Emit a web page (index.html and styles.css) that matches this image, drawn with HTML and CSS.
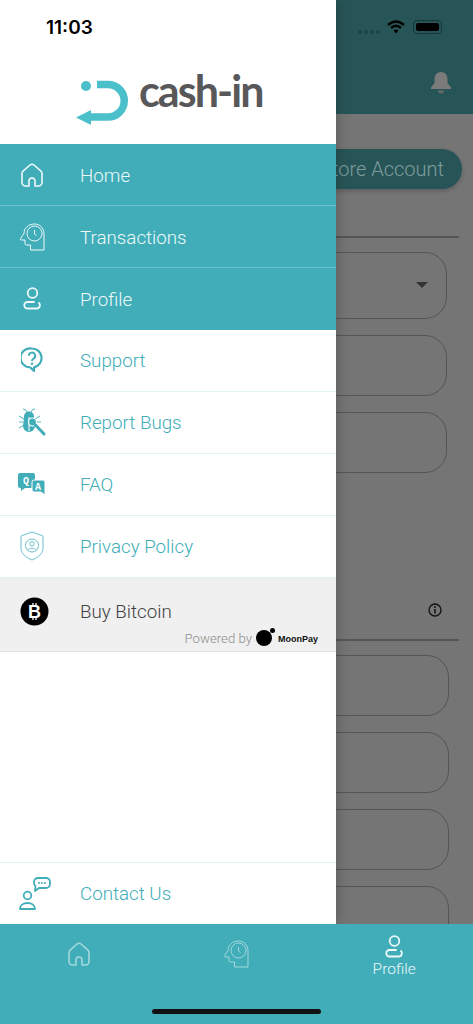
FILE: index.html
```html
<!DOCTYPE html>
<html lang="en">
<head>
    <meta charset="UTF-8">
    <meta name="viewport" content="width=device-width, initial-scale=1.0">
    <title>Cash-in</title>
    <link rel="stylesheet" href="styles.css">
</head>
<body>
    <svg class="defs" width="0" height="0">
        <symbol id="i-home" viewBox="0 0 22 24">
            <path d="M8 23H4.500A3.500 3.500 0 0 1 1 19.500V10.500Q1 8.800 2.300 7.800L9 2Q11 .4 13 2L19.700 7.800Q21 8.800 21 10.500V19.500A3.500 3.500 0 0 1 17.500 23H14V18A3 3 0 0 0 8 18Z" fill="none" stroke="currentColor" stroke-width="1.600" stroke-linejoin="round"/>
        </symbol>
        <symbol id="i-head" viewBox="0 0 26 28">
            <g fill="none" stroke="currentColor" stroke-width="1" stroke-linejoin="round">
                <path d="M25 27H11.500V22H7.500A1.500 1.500 0 0 1 6 20.500V17H2.500Q.8 17 1.600 15.500L5 10.500C5 5 9.500 1 15.500 1C21 1 25 5 25 11Z"/>
                <circle cx="15.500" cy="10.500" r="7.500"/>
                <path d="M15.500 7V11L17.500 12.500"/>
            </g>
        </symbol>
        <symbol id="i-user" viewBox="0 0 19 23">
            <g fill="none" stroke="currentColor" stroke-width="1.800" stroke-linecap="round">
                <circle cx="9.500" cy="6" r="4.800"/>
                <path d="M11 15H4.500A3.200 3.200 0 0 0 4.500 21.500H14A3.200 3.200 0 0 0 16 16"/>
            </g>
        </symbol>
    </svg>

    <div class="app">
        <aside class="drawer">
            <div class="drawer-top">
                <div class="clock">11:03</div>
                <div class="logo">
                    <svg class="logo-mark" width="53" height="47" viewBox="0 0 53 47">
                        <circle cx="10" cy="6" r="5" fill="#4bc0cb"/>
                        <path d="M21 4.500H32A16.250 16.250 0 0 1 32 37H13" fill="none" stroke="#4bc0cb" stroke-width="7.500"/>
                        <path d="M0 37.500L15 30V45Z" fill="#4bc0cb"/>
                    </svg>
                    <span class="logo-text">cash-in</span>
                </div>
            </div>

            <a class="nav-row active">
                <span class="nav-icon"><svg width="22" height="24"><use href="#i-home"/></svg></span>
                <span>Home</span>
            </a>
            <a class="nav-row active">
                <span class="nav-icon"><svg width="26" height="28"><use href="#i-head"/></svg></span>
                <span>Transactions</span>
            </a>
            <a class="nav-row active">
                <span class="nav-icon"><svg width="19" height="23"><use href="#i-user"/></svg></span>
                <span>Profile</span>
            </a>
            <a class="nav-row">
                <span class="nav-icon">
                    <svg width="22" height="26" viewBox="0 0 22 26">
                        <path d="M11 1.500A9.500 9.500 0 1 0 9 20.300L13 24V20.300A9.500 9.500 0 0 0 11 1.500Z" fill="none" stroke="#40adb8" stroke-width="2.200" stroke-linejoin="round"/>
                        <path d="M7.800 8.800A3.200 3.200 0 1 1 12.500 11.600Q11 12.500 11 14" fill="none" stroke="#40adb8" stroke-width="1.900"/>
                        <circle cx="11" cy="16.800" r="1.200" fill="#40adb8"/>
                    </svg>
                </span>
                <span>Support</span>
            </a>
            <a class="nav-row">
                <span class="nav-icon">
                    <svg width="28" height="29" viewBox="0 0 28 29">
                        <g stroke="#40adb8" fill="none" stroke-width=".9">
                            <path d="M5 1Q8 1 9 4M17 1Q14 1 13 4M1 8L6 11M1 14H5M1 20L6 17M22 8L17 11M23 14H19"/>
                        </g>
                        <path d="M6 9A5 5 0 0 1 16 8L17 18A6 6 0 0 1 5 18Z" fill="#40adb8"/>
                        <path d="M11 9V23" stroke="#fff" stroke-width="1"/>
                        <circle cx="14.500" cy="14" r="4" fill="#40adb8" stroke="#fff" stroke-width="1.200"/>
                        <path d="M17.500 17L26 26" stroke="#40adb8" stroke-width="3" stroke-linecap="round"/>
                    </svg>
                </span>
                <span>Report Bugs</span>
            </a>
            <a class="nav-row">
                <span class="nav-icon">
                    <svg width="28" height="22" viewBox="0 0 28 22">
                        <path d="M2 0H15A2 2 0 0 1 17 2V13A2 2 0 0 1 15 15H7L3 18V15H2A2 2 0 0 1 0 13V2A2 2 0 0 1 2 0Z" fill="#40adb8"/>
                        <path d="M16 7H25A2 2 0 0 1 27 9V18V22L23 19H16A2 2 0 0 1 14 17V9A2 2 0 0 1 16 7Z" fill="#40adb8" stroke="#fff"/>
                        <text class="qa-letter" x="5" y="11">Q</text>
                        <text class="qa-letter" x="17" y="17">A</text>
                    </svg>
                </span>
                <span>FAQ</span>
            </a>
            <a class="nav-row">
                <span class="nav-icon">
                    <svg width="24" height="30" viewBox="0 0 24 30">
                        <g fill="none" stroke="#6cc3cc" stroke-width="1">
                            <path d="M12 1L23 5V17C23 23 17 27 12 29C7 27 1 23 1 17V5Z"/>
                            <circle cx="12" cy="14.500" r="6.500"/>
                            <circle cx="12" cy="12.800" r="2.200"/>
                            <path d="M7.800 19.500C8.500 16.500 15.500 16.500 16.200 19.500"/>
                        </g>
                    </svg>
                </span>
                <span>Privacy Policy</span>
            </a>
            <div class="buy-row">
                <div class="buy-main">
                    <span class="nav-icon nudge-2">
                        <svg width="29" height="29" viewBox="0 0 29 29">
                            <circle cx="14.500" cy="14.500" r="14" fill="#000"/>
                            <text class="btc-letter" x="14.500" y="20.500">B</text>
                            <path d="M13 6V9M16 6V9M13 20V23M16 20V23" stroke="#fff" stroke-width="1.300"/>
                        </svg>
                    </span>
                    <span>Buy Bitcoin</span>
                </div>
                <div class="powered">
                    <span>Powered by</span>
                    <svg class="moon" width="20" height="18" viewBox="0 0 20 18">
                        <circle cx="8" cy="10" r="8" fill="#000"/>
                        <circle cx="16.500" cy="2.500" r="2.500" fill="#000"/>
                    </svg>
                    <span class="moon-name">MoonPay</span>
                </div>
            </div>
            <div class="spacer"></div>
            <a class="nav-row contact">
                <span class="nav-icon nudge-3">
                    <svg width="32" height="33" viewBox="0 0 32 33">
                        <g fill="none" stroke="#40adb8" stroke-width="1.800">
                            <path d="M19 1H27A4 4 0 0 1 31 5V7A4 4 0 0 1 27 11H20L16 14L16.500 9Q15 8 15 6V5A4 4 0 0 1 19 1Z" stroke-linejoin="round"/>
                            <circle cx="8.500" cy="18.500" r="3.800"/>
                            <path d="M1 32C1 24 16 24 16 32Z" stroke-linejoin="round"/>
                        </g>
                        <path d="M19 6H21M22 6H24M25 6H27" stroke="#40adb8" stroke-width="1.500"/>
                    </svg>
                </span>
                <span>Contact Us</span>
            </a>
        </aside>

        <main class="behind">
            <div class="behind-top">
                <div class="status-icons">
                    <span class="signal"><i></i><i></i><i></i><i></i></span>
                    <svg width="18" height="14" viewBox="0 0 18 14">
                        <path d="M1 5Q9 -2 17 5M4 8Q9 3.500 14 8" fill="none" stroke="#000" stroke-width="2.400"/>
                        <path d="M6.500 10.500Q9 8.500 11.500 10.500L9 13.500Z" fill="#000"/>
                    </svg>
                    <span class="battery"><b></b></span>
                </div>
                <svg class="bell" width="20" height="22" viewBox="0 0 20 22">
                    <path d="M10 0C15 0 16.500 4 16.500 8V11L20 15.500V17H0V15.500L3.500 11V8C3.500 4 5 0 10 0Z" fill="#7b7b7b"/>
                    <path d="M7 18.500H13Q12.500 21.500 10 21.500T7 18.500Z" fill="#6a6a6a"/>
                </svg>
            </div>
            <div class="behind-body">
                <div class="restore-btn">Restore Account</div>
                <div class="rule"></div>
                <div class="field tall"><span class="caret"></span></div>
                <div class="field"></div>
                <div class="field"></div>
                <div class="info-line">
                    <svg width="14" height="14" viewBox="0 0 14 14">
                        <circle cx="7" cy="7" r="6" fill="none" stroke="#111" stroke-width="1.300"/>
                        <path d="M7 6V10.500" stroke="#111" stroke-width="1.500"/>
                        <circle cx="7" cy="4" r=".9" fill="#111"/>
                    </svg>
                </div>
                <div class="rule second"></div>
                <div class="field wide"></div>
                <div class="field wide"></div>
                <div class="field wide"></div>
                <div class="field wide"></div>
            </div>
        </main>
    </div>

    <nav class="tabbar">
        <div class="tabs">
            <div class="tab dim"><svg width="22" height="24"><use href="#i-home"/></svg></div>
            <div class="tab dim"><svg width="26" height="28"><use href="#i-head"/></svg></div>
            <div class="tab current"><svg width="19" height="23"><use href="#i-user"/></svg><span>Profile</span></div>
        </div>
        <div class="home-bar"></div>
    </nav>
</body>
</html>
```

FILE: styles.css
```css
* {
    box-sizing: border-box;
}
html, body {
    margin: 0;
    padding: 0;
}
body {
    width: 473px;
    height: 1024px;
    overflow: hidden;
    font-family: Roboto, "Noto Sans", sans-serif;
    font-weight: 300;
    background-color: #757575;
}
.defs {
    display: block;
    height: 0;
}
.app {
    display: flex;
    height: 924px;
}

/* drawer */
.drawer {
    position: relative;
    z-index: 1;
    display: flex;
    flex-direction: column;
    flex: 0 0 336px;
    background-color: #fff;
    box-shadow: 0 0 14px rgba(0,0,0,0.25);
}
.drawer-top {
    height: 144px;
    padding-top: 17px;
}
.clock {
    padding-left: 46px;
    font-family: Inter, sans-serif;
    font-size: 19px;
    font-weight: 600;
    line-height: 22px;
    color: #000;
}
.logo {
    display: flex;
    align-items: center;
    gap: 10px;
    margin-top: 29px;
    padding-left: 76px;
}
.logo-text {
    margin-bottom: 24px;
    font-family: Lato, sans-serif;
    font-size: 43px;
    font-weight: 700;
    line-height: 46px;
    letter-spacing: -1.900px;
    color: #58585a;
}
.nav-row {
    display: flex;
    align-items: center;
    height: 62px;
    padding-top: 1px;
    font-size: 18.750px;
    color: #40adb8;
    border-bottom: 1px solid #dff2f4;
}
.nav-row.active {
    padding-top: 2px;
    color: #eef9fa;
    background-color: #40adb8;
    border-bottom-color: #6bc0c9;
}
.nav-row.active:nth-of-type(3) {
    padding-top: 1px;
    border-bottom: none;
}
.nav-icon {
    display: flex;
    justify-content: center;
    flex: 0 0 64px;
    margin-right: 16px;
    margin-top: -2px;
}
.nudge-2 {
    padding-left: 4px;
}
.nudge-3 {
    padding-left: 6px;
}
.qa-letter {
    font-family: "Liberation Mono", monospace;
    font-size: 10px;
    font-weight: 700;
    fill: #fff;
}
.btc-letter {
    font-family: "Liberation Sans", sans-serif;
    font-size: 18px;
    font-weight: 700;
    text-anchor: middle;
    fill: #fff;
}
.buy-row {
    height: 74px;
    padding-top: 20px;
    background-color: #f0f0f0;
    border-bottom: 1px solid #e2e2e2;
}
.buy-main {
    display: flex;
    align-items: center;
    height: 28px;
    font-size: 18.750px;
    color: #3f3f3f;
}
.powered {
    display: flex;
    justify-content: flex-end;
    align-items: center;
    gap: 4px;
    margin-top: 5px;
    padding-right: 18px;
    font-size: 13.200px;
    color: #8e8e8e;
}
.moon {
    margin-top: -4px;
}
.moon-name {
    margin-left: -2px;
    font-family: "Liberation Sans", sans-serif;
    font-size: 9px;
    font-weight: 700;
    color: #111;
}
.spacer {
    flex: 1;
}
.contact {
    border-top: 1px solid #dff2f4;
    border-bottom: none;
}

/* dimmed page under the drawer */
.behind {
    flex: 1;
    overflow: hidden;
}
.behind-top {
    display: flex;
    flex-direction: column;
    height: 114px;
    background-color: #275557;
}
.status-icons {
    display: flex;
    align-items: center;
    height: 14px;
    margin-top: 20px;
    padding-left: 22px;
}
.signal {
    display: flex;
    gap: 2px;
    margin-right: 7px;
    margin-top: 10px;
}
.signal i {
    width: 4px;
    height: 4px;
    border-radius: 50%;
    background-color: #1e4345;
}
.battery {
    display: block;
    width: 29px;
    height: 14px;
    margin-left: 8px;
    padding: 2px;
    border: 1px solid #163638;
    border-radius: 4px;
}
.battery b {
    display: block;
    width: 100%;
    height: 100%;
    border-radius: 2px;
    background-color: #000;
}
.bell {
    margin: 38px 0 0 95px;
}
.behind-body {
    padding-top: 35px;
}
.restore-btn {
    width: 166px;
    height: 40px;
    margin-left: -40px;
    padding-right: 18px;
    font-size: 20px;
    line-height: 40px;
    text-align: right;
    color: #7f9c9d;
    background-color: #275557;
    border-radius: 0 20px 20px 0;
    box-shadow: 0 2px 4px rgba(0,0,0,0.2);
}
.rule {
    width: 123px;
    height: 2px;
    margin-top: 47px;
    margin-bottom: 14px;
    background-color: #555;
}
.rule.second {
    margin-top: 22px;
}
.field {
    position: relative;
    width: 151px;
    height: 61px;
    margin-left: -40px;
    margin-bottom: 16px;
    border: 1px solid #555;
    border-radius: 22px;
}
.field.tall {
    height: 67px;
}
.field.wide {
    width: 153px;
}
.caret {
    position: absolute;
    right: 18px;
    top: 29px;
    border-left: 6px solid transparent;
    border-right: 6px solid transparent;
    border-top: 6px solid #333;
}
.info-line {
    display: flex;
    justify-content: flex-end;
    height: 14px;
    margin-top: 130px;
    padding-right: 31px;
}

/* bottom tabs */
.tabbar {
    position: relative;
    z-index: 2;
    height: 100px;
    background-color: #40adb8;
}
.tabs {
    display: grid;
    grid-template-columns: repeat(3, 1fr);
    height: 85px;
}
.tab {
    display: flex;
    flex-direction: column;
    align-items: center;
    color: #eef9fa;
    font-size: 15.500px;
    line-height: 20px;
}
.tab.dim {
    justify-content: center;
    height: 60px;
    color: #a4d8dd;
}
.tab.current {
    padding-top: 11px;
}
.tab.current span {
    margin-top: 1px;
}
.home-bar {
    width: 169px;
    height: 5px;
    margin: 0 auto;
    border-radius: 3px;
    background-color: #111;
}
```
